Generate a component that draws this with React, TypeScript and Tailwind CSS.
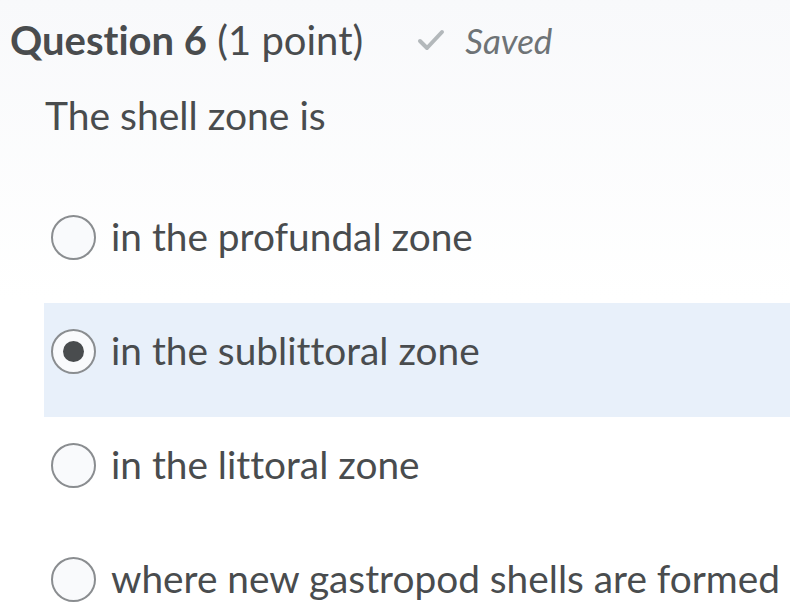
import React from "react";

const options = [
  "in the profundal zone",
  "in the sublittoral zone",
  "in the littoral zone",
  "where new gastropod shells are formed",
];

function Radio({ checked }: { checked: boolean }) {
  return (
    <span className="flex size-[45px] shrink-0 items-center justify-center rounded-full border-2 border-[#8a8d90] bg-[#f9fafc]">
      {checked && <span className="size-[21px] rounded-full bg-[#494c4e]" />}
    </span>
  );
}

export default function App() {
  const selected = 1;
  return (
    <div
      className="h-[616px] w-[790px] overflow-hidden bg-gradient-to-b from-[#f8f9fb] to-white to-[300px] text-[#494c4e] [font-variant-ligatures:none]"
      style={{ fontFamily: "Lato, 'Open Sans', sans-serif" }}
    >
      <div className="flex items-center pl-[10px] pt-[14px]">
        <h1 className="text-[40px] leading-[50px]">
          <span className="font-bold">Question 6</span> (1 point)
        </h1>
        <span className="ml-[54px] flex items-center gap-[20px] text-[#6e7376]">
          <svg width="28" height="22" viewBox="0 0 28 22" fill="none">
            <path d="M3 12l7 7L25 3" stroke="#b3b8bb" strokeWidth="4" strokeLinecap="round" strokeLinejoin="round" />
          </svg>
          <span className="text-[35px] italic">Saved</span>
        </span>
      </div>
      <p className="pl-[45px] pt-[24px] text-[39px] leading-[48px]">The shell zone is</p>
      <div className="mt-[50px] ml-[44px]">
        {options.map((o, i) => (
          <div
            key={o}
            className={`flex h-[114px] items-start gap-[15px] pl-[7px] pt-[26px] ${i === selected ? "bg-[#e8f0fa]" : ""}`}
          >
            <Radio checked={i === selected} />
            <span className="-mt-[3px] text-[38.8px] leading-[48px]">{o}</span>
          </div>
        ))}
      </div>
    </div>
  );
}
